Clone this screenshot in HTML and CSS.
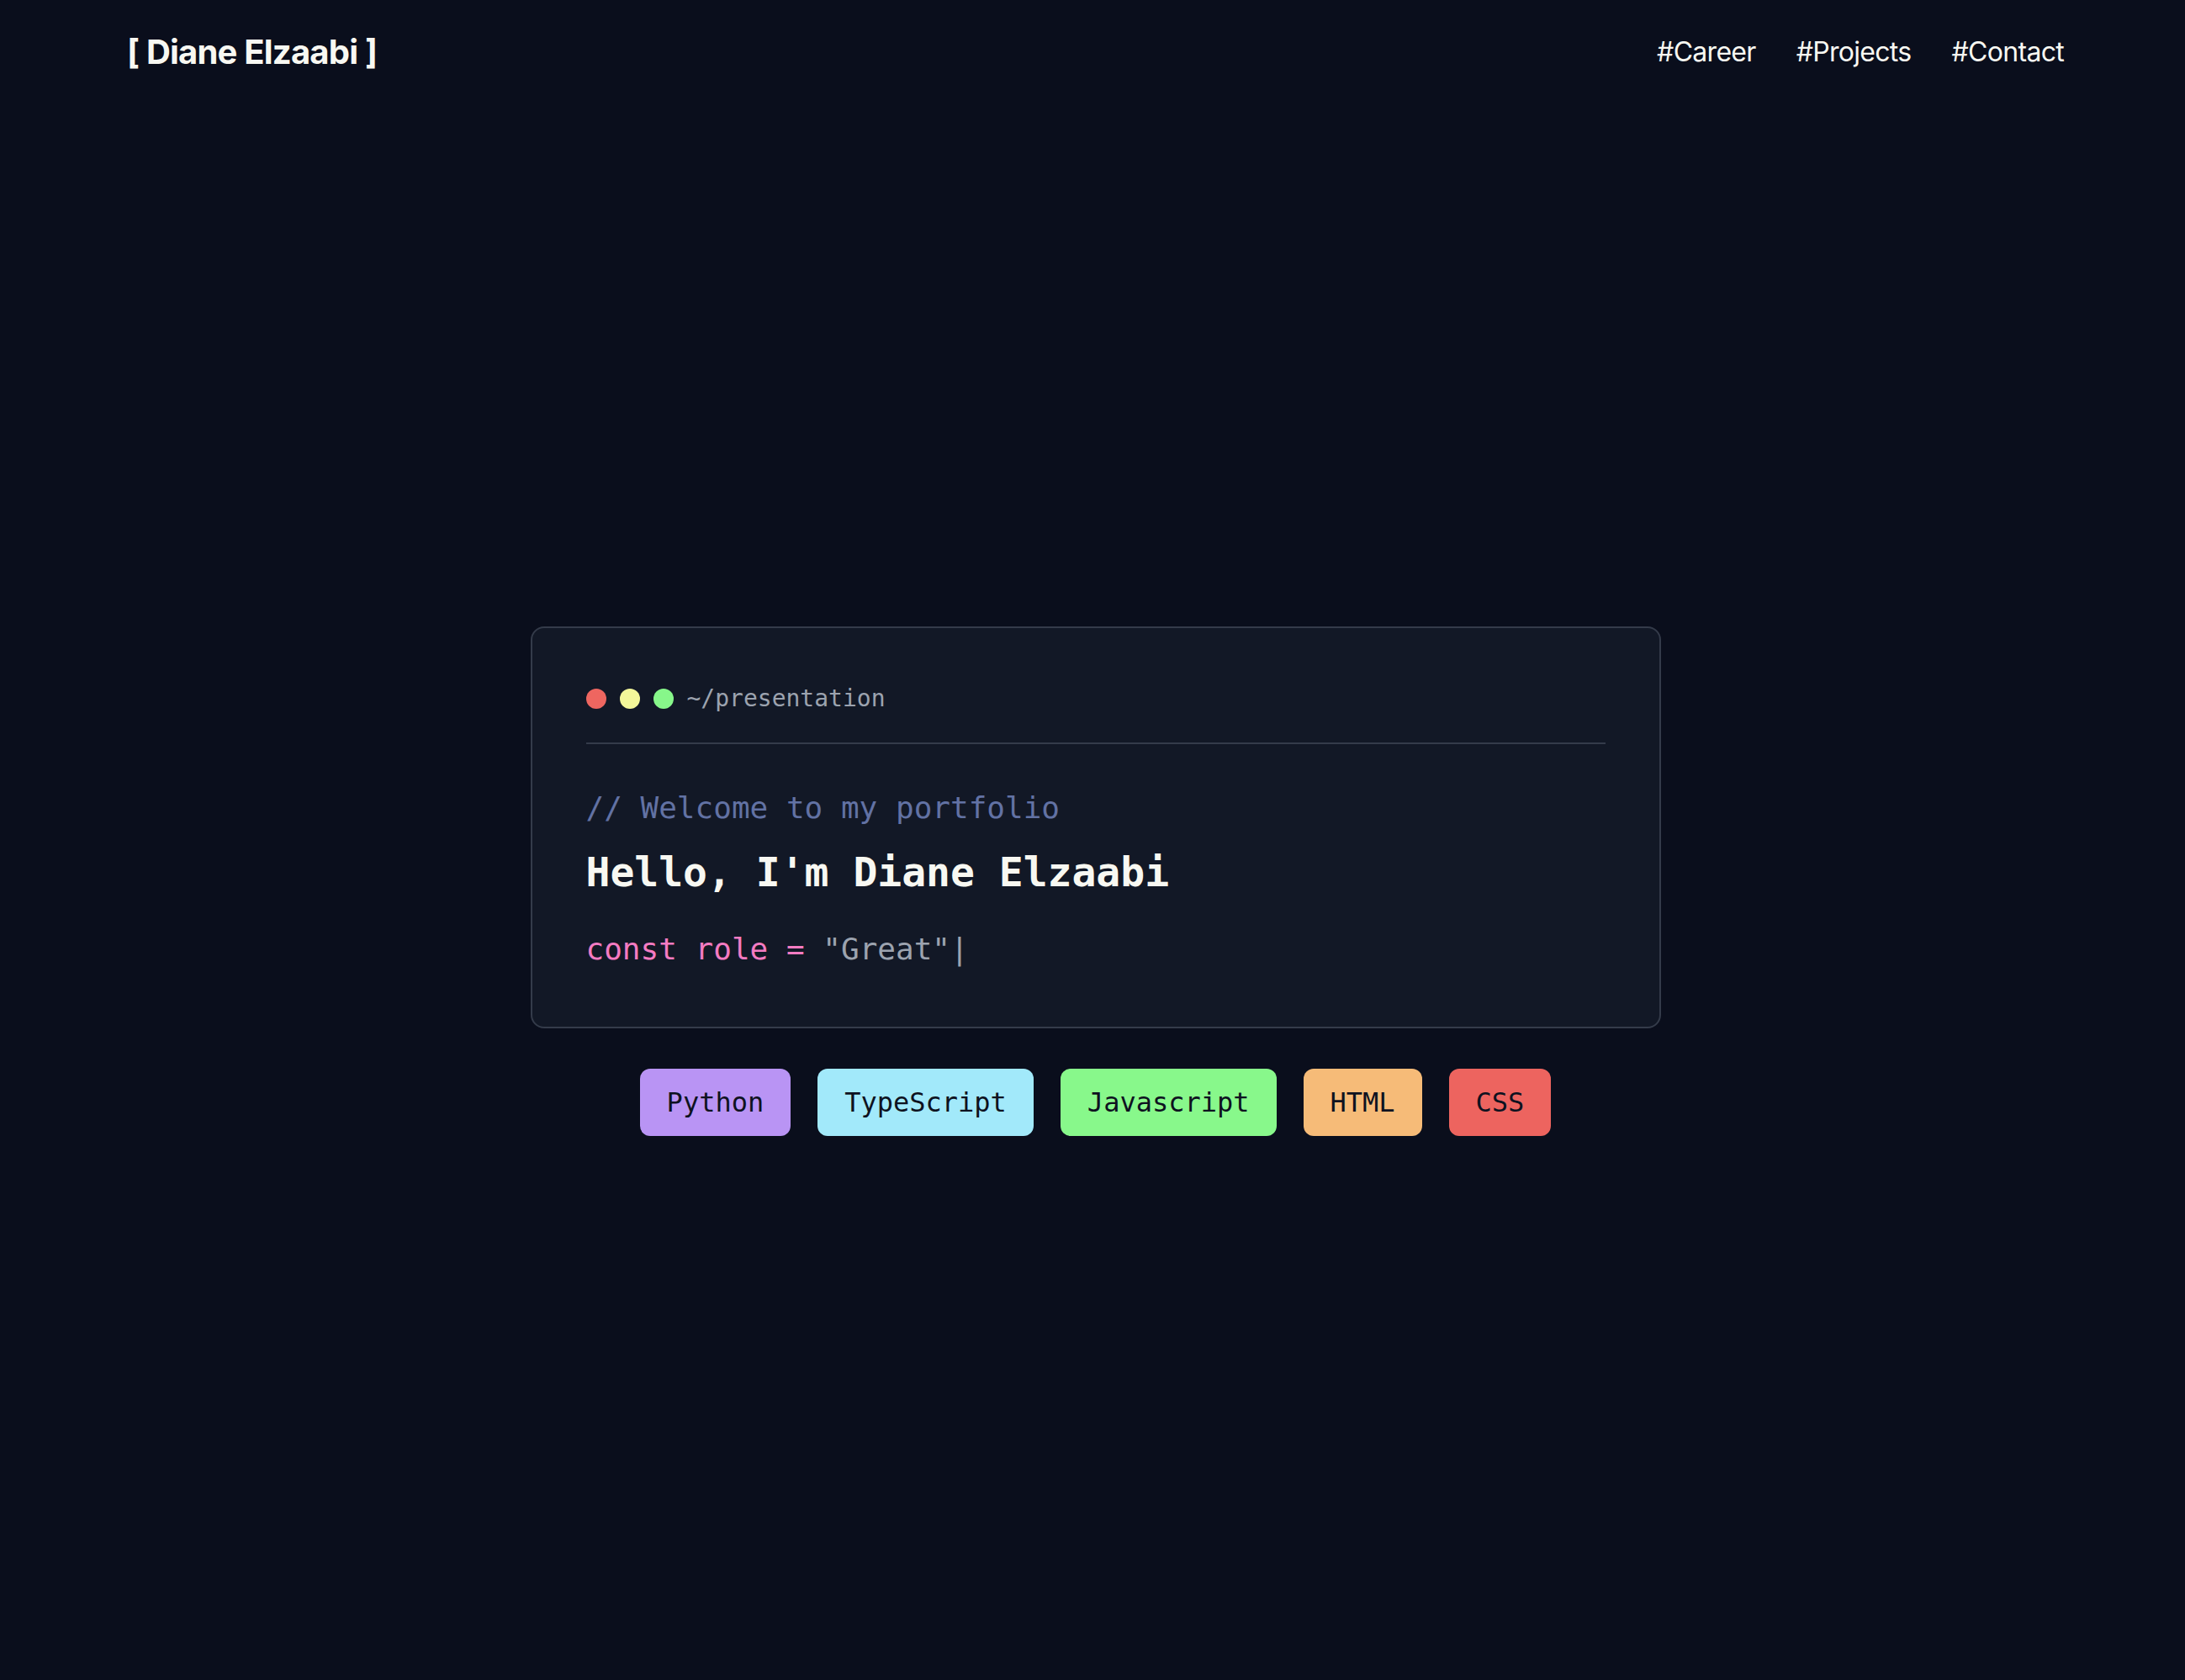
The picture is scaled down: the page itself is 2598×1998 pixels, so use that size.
FILE: index.html
```html
<!DOCTYPE html>
<html lang="en">
<head>
<meta charset="utf-8">
<title>Diane Elzaabi</title>
<link rel="stylesheet" href="styles.css">
</head>
<body>
<div class="page">
  <header class="site-header">
    <a class="logo" href="#">[ Diane Elzaabi ]</a>
    <nav class="nav">
      <a href="#career">#Career</a>
      <a href="#projects">#Projects</a>
      <a href="#contact">#Contact</a>
    </nav>
  </header>
  <main class="hero">
    <section class="terminal">
      <div class="terminal-bar">
        <span class="dot dot-red"></span>
        <span class="dot dot-yellow"></span>
        <span class="dot dot-green"></span>
        <span class="path">~/presentation</span>
      </div>
      <p class="comment">// Welcome to my portfolio</p>
      <h1 class="greeting">Hello, I'm Diane Elzaabi</h1>
      <p class="code"><span class="kw">const role =</span> <span class="str">"Great"</span><span class="cursor">|</span></p>
    </section>
    <ul class="tags">
      <li class="tag tag-python">Python</li>
      <li class="tag tag-ts">TypeScript</li>
      <li class="tag tag-js">Javascript</li>
      <li class="tag tag-html">HTML</li>
      <li class="tag tag-css">CSS</li>
    </ul>
  </main>
</div>
</body>
</html>
```
FILE: styles.css
```css
* { box-sizing: border-box; }
html, body {
  margin: 0;
  padding: 0;
  background: #0a0e1c;
  height: 100%;
  overflow: hidden;
}
body {
  font-family: "Inter", "Liberation Sans", sans-serif;
  color: #f8f8f2;
}
.page {
  padding-left: 7px;
  height: 1998px;
  display: flex;
  flex-direction: column;
}
.site-header {
  height: 121px;
  padding: 2px 144px 0;
  display: flex;
  align-items: center;
  justify-content: space-between;
  flex-shrink: 0;
}
.logo {
  font-size: 40px;
  line-height: 56px;
  font-weight: 700;
  letter-spacing: -0.8px;
  color: #f8f8f2;
  text-decoration: none;
}
.nav {
  display: flex;
  gap: 48px;
}
.nav a {
  font-size: 32px;
  line-height: 48px;
  letter-spacing: -0.7px;
  color: #f8f8f2;
  text-decoration: none;
}
.hero {
  flex: 1;
  display: flex;
  flex-direction: column;
  align-items: center;
  justify-content: center;
  padding-bottom: 23px;
  gap: 48px;
}
.terminal {
  width: 1344px;
  background: #121826;
  border: 2px solid #343b4a;
  border-radius: 16px;
  padding: 64px;
  font-family: "DejaVu Sans Mono", "Liberation Mono", monospace;
}
.terminal-bar {
  display: flex;
  align-items: center;
  gap: 16px;
  padding-bottom: 32px;
  border-bottom: 2px solid #343b4a;
  margin-bottom: 48px;
}
.dot {
  width: 24px;
  height: 24px;
  border-radius: 50%;
  display: block;
}
.dot-red { background: #ee6660; }
.dot-yellow { background: #f3f79a; }
.dot-green { background: #87f78a; }
.path {
  font-size: 28px;
  line-height: 40px;
  color: #9ca3af;
}
.comment {
  margin: 0 0 16px;
  font-size: 36px;
  line-height: 56px;
  color: #6272a4;
}
.greeting {
  margin: 0 0 32px;
  font-size: 48px;
  line-height: 64px;
  font-weight: 700;
  color: #f8f8f2;
}
.code {
  margin: 0;
  font-size: 36px;
  line-height: 56px;
  color: #9ca3af;
}
.kw { color: #f47bc2; }
.str { color: #9ca3af; }
.cursor { color: #9ca3af; }
.tags {
  list-style: none;
  margin: 0;
  padding: 0;
  display: flex;
  gap: 32px;
}
.tag {
  font-family: "DejaVu Sans Mono", "Liberation Mono", monospace;
  font-size: 32px;
  line-height: 48px;
  padding: 16px 32px;
  border-radius: 12px;
  color: #0e1220;
}
.tag-python { background: #b994f4; }
.tag-ts { background: #a2e9fa; }
.tag-js { background: #88f88b; }
.tag-html { background: #f6bb78; }
.tag-css { background: #ed645f; }
```
